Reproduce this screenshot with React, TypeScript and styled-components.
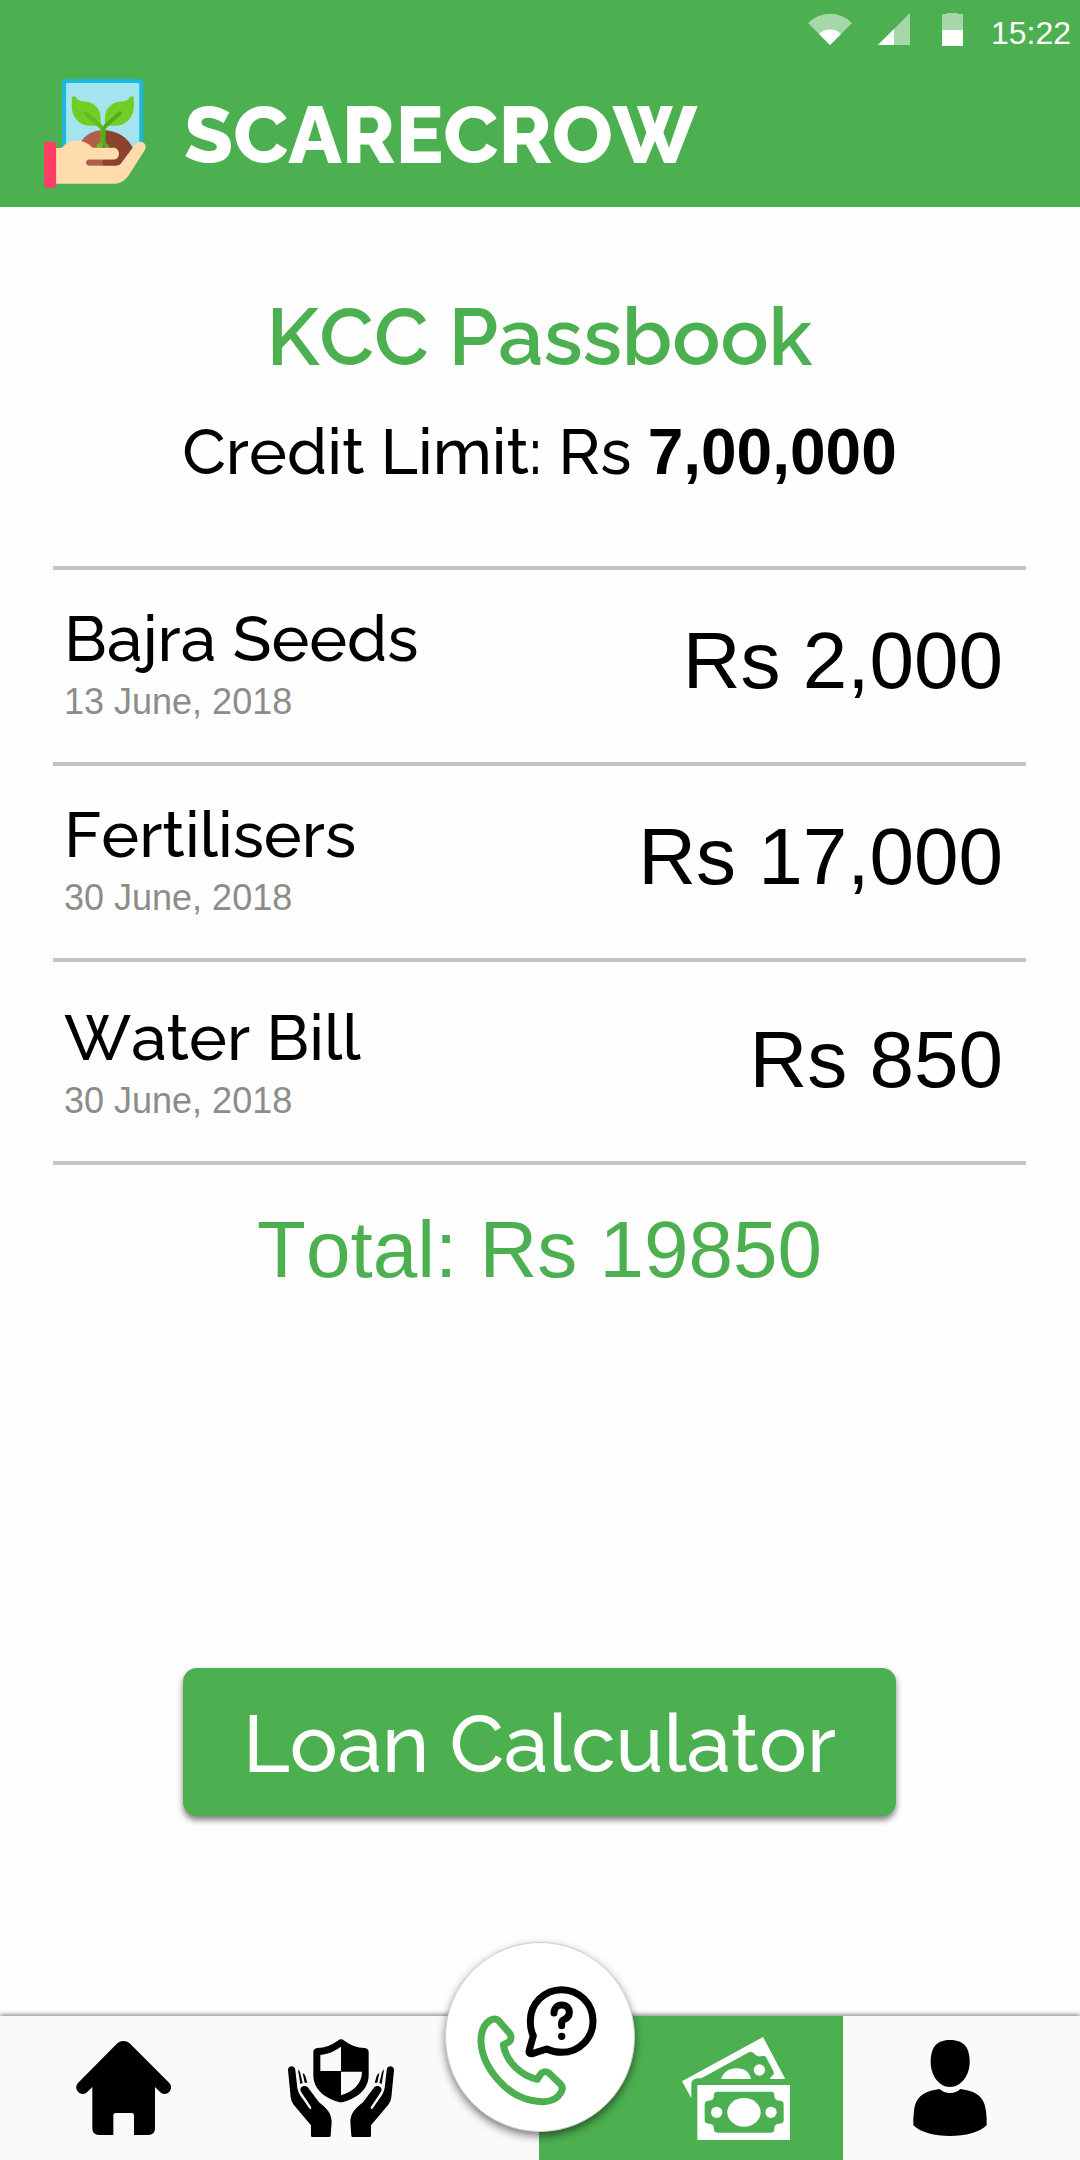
import React from "react";
import styled, { createGlobalStyle, ThemeProvider } from "styled-components";

const theme = {
  green: "#4caf50",
  page: "#fefefe",
  bar: "#fafafa",
  rule: "#c4c4c4",
  muted: "#8c8c8c",
  display: '"Raleway", "Lato", sans-serif',
  figures: '"Liberation Sans", Arial, sans-serif',
};

const GlobalStyle = createGlobalStyle`
  *, *::before, *::after { box-sizing: border-box; }
  body { margin: 0; background: ${theme.page}; color: #000; }
  h1, h2, p, ul { margin: 0; padding: 0; }
  svg { display: block; flex: none; }
`;

const Screen = styled.div`
  display: flex;
  flex-direction: column;
  min-height: 100vh;
  font-family: ${(p) => p.theme.display};
  font-kerning: none;
`;

const Header = styled.header`
  background: ${(p) => p.theme.green};
  color: #fff;
`;

const StatusBar = styled.div`
  display: flex;
  justify-content: flex-end;
  align-items: center;
  height: 58px;
  padding-right: 9px;
`;

const StatusIcons = styled.div`
  display: flex;
  align-items: center;
  gap: 26px;
  margin-right: 28px;
`;

const Clock = styled.time`
  font: 32px/40px ${(p) => p.theme.figures};
  padding-top: 7px;
`;

const Brand = styled.div`
  display: flex;
  align-items: center;
  gap: 38px;
  height: 149px;
  padding: 2px 44px 0;
`;

const BrandName = styled.h1`
  padding-top: 3px;
  font-size: 80px;
  line-height: 96px;
  font-weight: 800;
`;

const Main = styled.main`
  flex: 1;
  display: flex;
  flex-direction: column;
  padding: 82px 54px 200px 53px;
`;

const Title = styled.h2`
  color: ${(p) => p.theme.green};
  font-size: 80px;
  line-height: 96px;
  font-weight: 600;
  text-align: center;
`;

const CreditLimit = styled.p`
  margin-top: 27px;
  font-size: 64px;
  line-height: 80px;
  font-weight: 500;
  text-align: center;

  strong {
    font-family: ${(p) => p.theme.figures};
    font-weight: 700;
  }
`;

const Ledger = styled.ul`
  margin-top: 74px;
  list-style: none;
  border-top: 4px solid ${(p) => p.theme.rule};
`;

const Entry = styled.li`
  display: flex;
  justify-content: space-between;
  align-items: flex-start;
  padding: 37px 23px 40px 11px;
  border-bottom: 4px solid ${(p) => p.theme.rule};

  &:last-child {
    padding-top: 44px;
  }
`;

const EntryText = styled.div`
  display: flex;
  flex-direction: column;
  gap: 11px;
`;

const EntryName = styled.span`
  font-size: 64px;
  line-height: 64px;
  font-weight: 500;
`;

const EntryDate = styled.time`
  color: ${(p) => p.theme.muted};
  font: 36px/40px ${(p) => p.theme.figures};
  font-kerning: none;
`;

const Amount = styled.span`
  font: 80px/108px ${(p) => p.theme.figures};
  font-kerning: none;
`;

const Total = styled.p`
  margin-top: 37px;
  color: ${(p) => p.theme.green};
  font: 80px/96px ${(p) => p.theme.figures};
  font-kerning: none;
  text-align: center;
`;

const ActionButton = styled.button`
  align-self: center;
  margin-top: auto;
  height: 148px;
  padding: 4px 60px 0;
  border: 0;
  border-radius: 14px;
  background: ${(p) => p.theme.green};
  color: #fff;
  font: 500 80px/96px ${(p) => p.theme.display};
  font-kerning: none;
  box-shadow: 0 4px 6px rgba(0, 0, 0, 0.5);
  cursor: pointer;
`;

const TabBar = styled.nav`
  position: relative;
  display: grid;
  grid-template-columns: 237fr 302fr 304fr 237fr;
  height: 144px;
  background: ${(p) => p.theme.bar};
  box-shadow: 0 -2px 4px rgba(0, 0, 0, 0.4);
`;

const Tab = styled.a<{ $active?: boolean; $before?: number; $after?: number }>`
  display: flex;
  align-items: center;
  justify-content: center;
  padding-left: ${(p) => p.$before ?? 0}px;
  padding-right: ${(p) => p.$after ?? 0}px;
  background: ${(p) => (p.$active ? p.theme.green : "transparent")};
  color: ${(p) => (p.$active ? "#fff" : "#000")};
`;

const CallButton = styled.button`
  position: absolute;
  left: 50%;
  bottom: 28px;
  transform: translateX(-50%);
  width: 190px;
  height: 190px;
  padding: 18px 6px 0 0;
  display: flex;
  align-items: center;
  justify-content: center;
  border: 1px solid #cfcfcf;
  border-radius: 50%;
  background: #fff;
  box-shadow: 0 4px 8px rgba(0, 0, 0, 0.5);
  cursor: pointer;
`;

const Logo = () => (
  <svg width="102" height="109" viewBox="42 42 306 328" aria-hidden="true">
    <path d="M96 252V54a12 12 0 0 1 12-12H328a12 12 0 0 1 12 12V252Z" fill="#1cb8df" />
    <path d="M108 252V57q0-3 3-3H325q3 0 3 3V252Z" fill="#a4e4ee" />
    <path d="M218 196c-30 0-54 14-68 40l-10 60h78Z" fill="#b35e4b" />
    <path d="M218 196c42 0 76 20 92 56l-40 52h-52Z" fill="#8c432d" />
    <path
      d="M212 183h-28c-36 0-59-26-59-60v-22c0-8 9-9 13-3 6 9 13 12 24 12 29 0 50 21 50 50Z"
      fill="#6fcf26"
    />
    <path
      d="M225 183h28c36 0 59-26 59-60v-22c0-8-9-9-13-3-6 9-13 12-24 12-29 0-50 21-50 50Z"
      fill="#6fcf26"
    />
    <path d="M168 146l42 37 8 9v44l-12 8" fill="none" stroke="#63bd20" strokeWidth="13" strokeLinecap="round" strokeLinejoin="round" />
    <path d="M270 145l-42 37-7 10v44l10 8" fill="none" stroke="#57ab18" strokeWidth="12" strokeLinecap="round" strokeLinejoin="round" />
    <path
      d="M76 250h18c12-14 28-23 46-23 19 0 35 9 48 22h62c11 0 17 8 17 18s-7 18-17 18h-73c-12 0-12 17 0 17h84c6 0 9-2 12-6l42-56c7-9 18-12 26-6 8 5 8 15 3 23l-46 72c-12 19-27 28-48 28H76Z"
      fill="#fedcac"
    />
    <path d="M177 285h41v17h-41c-12 0-12-17 0-17Z" fill="#b35e4b" />
    <path d="M218 285h38q6 0 12-6l14-3-15 21q-4 5-11 5h-38Z" fill="#8c432d" />
    <rect x="42" y="231" width="36" height="139" rx="10" fill="#ff3d67" />
  </svg>
);

const WifiIcon = () => (
  <svg width="44" height="32" viewBox="0 0 44 32" fill="#fff" aria-hidden="true">
    <path d="M0 10a31 31 0 0 1 44 0L22 32Z" opacity=".5" />
    <path d="M11 21a16 16 0 0 1 22 0L22 32Z" />
  </svg>
);

const SignalIcon = () => (
  <svg width="38" height="32" viewBox="0 0 38 32" fill="#fff" aria-hidden="true">
    <path d="M32 0v32H0Z" opacity=".5" />
    <path d="M16 16v16H0Z" />
  </svg>
);

const BatteryIcon = () => (
  <svg width="21" height="33" viewBox="0 0 21 33" fill="#fff" aria-hidden="true">
    <path d="M0 1h5V0h11v1h5v16H0Z" opacity=".5" />
    <path d="M0 17h21v16H0Z" />
  </svg>
);

const HomeIcon = () => (
  <svg width="95" height="94" viewBox="228 363 285 282" fill="currentColor" aria-hidden="true">
    <path d="M352 370q8-7 18-7 11 0 19 7L508 489c7 8 7 18 0 26s-19 9-27 2l-16-16V625q0 20-20 20H402V586q0-7-7-7H347q-7 0-7 7v59H297q-20 0-20-20V501l-16 16c-8 7-20 6-27-2s-7-18 0-26Z" />
  </svg>
);

const Hand = () => (
  <>
    <path d="M864 450c0-15 21-15 22 0l6 54c3 14 9 24 17 34l18 26c4 6 9 2 6-4l-30-45c-8-14 12-24 22-11l32 43c24 18 38 34 38 59l-3 41q0 4-4 4h-51q-4 0-4-4v-31l-52-62q-8-10-9-22Z" />
    <path d="M894 449q4 1 6 8l8 32-7 3Z" />
    <path d="M908 460q5 1 8 8l6 20h-8Z" />
  </>
);

const InsuranceIcon = () => (
  <svg width="106" height="98" viewBox="864 357 318 294" fill="currentColor" aria-hidden="true">
    <path
      fillRule="evenodd"
      d="M1013 362q10-8 20 0c18 13 38 21 61 22q12 1 12 13v68c0 41-32 69-74 80q-9 3-18 0c-42-11-74-39-74-80v-68q0-12 12-13c23-1 43-9 61-22ZM1023 380c-18 13-38 22-62 25v48h62ZM1023 455v71c36-11 63-35 63-71Z"
    />
    <Hand />
    <g transform="matrix(-1 0 0 1 2046 0)">
      <Hand />
    </g>
  </svg>
);

const CallHelpIcon = () => (
  <svg width="120" height="120" viewBox="170 197 360 360" fill="none" strokeLinecap="round" strokeLinejoin="round" aria-hidden="true">
    <path
      d="M235 301c-8-7-19-6-27 0-22 16-27 43-26 66 3 46 30 92 67 128 34 32 79 50 121 49 24-1 42-10 52-28 6-10 5-18-2-25l-32-31c-10-9-23-7-30 6l-7 11c-49-11-94-53-102-104l13-6c12-7 13-20 4-30Z"
      stroke="#4caf50"
      strokeWidth="21"
    />
    <path
      d="M339 346c-8-14-9-28-9-44a94 94 0 1 1 94 94c-16 0-30-3-45-10l-43 14q-13 2-9-11Z"
      stroke="#000"
      strokeWidth="21"
    />
    <path d="M401 278v-2c1-13 10-22 23-22 14 0 23 9 23 22 0 10-5 17-13 20-7 3-10 4-10 11v9" stroke="#000" strokeWidth="21" />
    <circle cx="424" cy="348" r="11" fill="#000" />
  </svg>
);

const MoneyIcon = () => (
  <svg width="108" height="103" viewBox="126 167 324 309" fill="currentColor" aria-hidden="true">
    <path
      fillRule="evenodd"
      d="M172 311H450V476H172ZM232 331q-10 0-10 10c0 12-5 17-16 17q-12 0-12 12v47q0 10 12 10c11 0 16 5 16 17q0 10 10 10H393q10 0 10-10c0-12 5-17 16-17q12 0 12-10v-47q0-12-12-12c-11 0-16-5-16-17q0-10-10-10Z"
    />
    <ellipse cx="312" cy="393" rx="50" ry="43" />
    <circle cx="230" cy="393" r="17" />
    <circle cx="393" cy="393" r="17" />
    <path d="M126 300L369 167L436 293H390q0-5 6-9 8-6 4-15L379 229q-4-8-12-5-12 4-20-3-10-12-19-9L184 291h-12q-18 2-18 18v42Z" />
    <path d="M243 293c7-20 24-32 47-32 24 0 39 12 43 32Z" />
    <circle cx="358" cy="266" r="17" />
  </svg>
);

const PersonIcon = () => (
  <svg width="74" height="96" viewBox="819 180 222 288" fill="currentColor" aria-hidden="true">
    <path d="M930 180c37 0 59 17 59 66 0 42-27 75-59 75s-58-33-58-75c0-49 22-66 58-66Z" />
    <path d="M899 327q12 12 31 12t31-12c46 7 72 21 77 66q3 22 2 43c-22 22-63 32-110 32s-88-10-110-32q-1-21 2-43c5-45 31-59 77-66Z" />
  </svg>
);

const entries = [
  { name: "Bajra Seeds", date: "13 June, 2018", iso: "2018-06-13", amount: "Rs 2,000" },
  { name: "Fertilisers", date: "30 June, 2018", iso: "2018-06-30", amount: "Rs 17,000" },
  { name: "Water Bill", date: "30 June, 2018", iso: "2018-06-30", amount: "Rs 850" },
];

export default function App() {
  return (
    <ThemeProvider theme={theme}>
      <GlobalStyle />
      <Screen>
        <Header>
          <StatusBar>
            <StatusIcons>
              <WifiIcon />
              <SignalIcon />
              <BatteryIcon />
            </StatusIcons>
            <Clock>15:22</Clock>
          </StatusBar>
          <Brand>
            <Logo />
            <BrandName>SCARECROW</BrandName>
          </Brand>
        </Header>
        <Main>
          <Title>KCC Passbook</Title>
          <CreditLimit>
            Credit Limit: Rs <strong>7,00,000</strong>
          </CreditLimit>
          <Ledger>
            {entries.map((entry) => (
              <Entry key={entry.name}>
                <EntryText>
                  <EntryName>{entry.name}</EntryName>
                  <EntryDate dateTime={entry.iso}>{entry.date}</EntryDate>
                </EntryText>
                <Amount>{entry.amount}</Amount>
              </Entry>
            ))}
          </Ledger>
          <Total>Total: Rs 19850</Total>
          <ActionButton type="button">Loan Calculator</ActionButton>
        </Main>
        <TabBar aria-label="Main">
          <Tab href="#home" aria-label="Home" $before={10}>
            <HomeIcon />
          </Tab>
          <Tab href="#insurance" aria-label="Insurance" $after={94}>
            <InsuranceIcon />
          </Tab>
          <Tab href="#passbook" aria-label="Passbook" aria-current="page" $active $before={90}>
            <MoneyIcon />
          </Tab>
          <Tab href="#profile" aria-label="Profile" $after={24}>
            <PersonIcon />
          </Tab>
          <CallButton type="button" aria-label="Call for help">
            <CallHelpIcon />
          </CallButton>
        </TabBar>
      </Screen>
    </ThemeProvider>
  );
}
